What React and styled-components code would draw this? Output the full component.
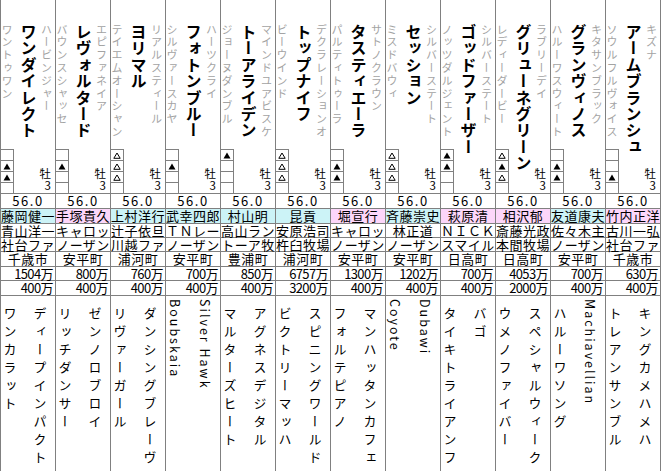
import React from "react";
import styled, { createGlobalStyle } from "styled-components";

const Global = createGlobalStyle`
  html, body { margin: 0; padding: 0; background: #fff; }
  body { font-family: "Noto Sans CJK JP", "Noto Sans", sans-serif; color: #000; }
`;

const LINE = "#808080";

const horses = [
  { dam: "ワントゥワン", name: "ワンダイレクト", sire: "ハービンジャー", marks: ["", "b", "b", ""], trainer: "藤岡健一", east: false, owner: "青山洋一", breeder: "社台ファ", area: "千歳市", p1: "1504万", p2: "400万", gdam: "ワンカラット", bms: "ディープインパクト" },
  { dam: "バウンスシャッセ", name: "レヴォルタード", sire: "エピファネイア", marks: ["", "b", "", ""], trainer: "手塚貴久", east: true, owner: "キャロッ", breeder: "ノーザン", area: "安平町", p1: "800万", p2: "400万", gdam: "リッチダンサー", bms: "ゼンノロブロイ" },
  { dam: "テイエムオーシャン", name: "ヨリマル", sire: "リアルスティール", marks: ["w", "w", "w", ""], trainer: "上村洋行", east: false, owner: "辻子依旦", breeder: "川越ファ", area: "浦河町", p1: "760万", p2: "400万", gdam: "リヴァーガール", bms: "ダンシングブレーヴ" },
  { dam: "シルヴァースカヤ", name: "フォトンブルー", sire: "ハーツクライ", marks: ["", "b", "", ""], trainer: "武幸四郎", east: false, owner: "ＴＮレー", breeder: "ノーザン", area: "安平町", p1: "700万", p2: "400万", gdam: "Boubskaia", bms: "Silver Hawk" },
  { dam: "ジョーヌダンブル", name: "トーアライデン", sire: "マインドユアビスケ", marks: ["b", "", "", ""], trainer: "村山明", east: false, owner: "高山ラン", breeder: "トーア牧", area: "豊浦町", p1: "850万", p2: "400万", gdam: "マルターズヒート", bms: "アグネスデジタル" },
  { dam: "ビーウインド", name: "トップナイフ", sire: "デクラレーションオ", marks: ["w", "w", "w", ""], trainer: "昆貢", east: false, owner: "安原浩司", breeder: "杵臼牧場", area: "浦河町", p1: "6757万", p2: "3200万", gdam: "ビクトリーマッハ", bms: "スピニングワールド" },
  { dam: "パルティトゥーラ", name: "タスティエーラ", sire: "サトノクラウン", marks: ["", "b", "b", ""], trainer: "堀宣行", east: true, owner: "キャロッ", breeder: "ノーザン", area: "安平町", p1: "1300万", p2: "400万", gdam: "フォルテピアノ", bms: "マンハッタンカフェ" },
  { dam: "ミスドバウィ", name: "セッション", sire: "シルバーステート", marks: ["w", "w", "w", ""], trainer: "斉藤崇史", east: false, owner: "林正道", breeder: "ノーザン", area: "安平町", p1: "1202万", p2: "400万", gdam: "Coyote", bms: "Dubawi" },
  { dam: "ノッツダルジェント", name: "ゴッドファーザー", sire: "シルバーステート", marks: ["b", "b", "", ""], trainer: "萩原清", east: true, owner: "ＮＩＣＫ", breeder: "スマイル", area: "日高町", p1: "700万", p2: "400万", gdam: "タイキトライアンフ", bms: "バゴ" },
  { dam: "レディーダービー", name: "グリューネグリーン", sire: "ラブリーデイ", marks: ["w", "b", "w", ""], trainer: "相沢郁", east: true, owner: "斎藤光政", breeder: "本間牧場", area: "日高町", p1: "4053万", p2: "2000万", gdam: "ウメノファイバー", bms: "スペシャルウィーク" },
  { dam: "ハルーワスウィート", name: "グランヴィノス", sire: "キタサンブラック", marks: ["", "b", "b", ""], trainer: "友道康夫", east: false, owner: "佐々木主", breeder: "ノーザン", area: "安平町", p1: "700万", p2: "400万", gdam: "ハルーワソング", bms: "Machiavellian" },
  { dam: "ソウルフルヴォイス", name: "アームブランシュ", sire: "キズナ", marks: ["", "", "b", ""], trainer: "竹内正洋", east: true, owner: "古川一弘", breeder: "社台ファ", area: "千歳市", p1: "630万", p2: "400万", gdam: "トレアンサンブル", bms: "キングカメハメハ" },
];

const Table = styled.div`
  display: flex;
  width: 661px;
  border-left: 1px solid ${LINE};
  box-sizing: border-box;
`;

const Column = styled.div`
  flex: 0 0 55px;
  width: 55px;
  box-sizing: border-box;
  border-right: 1px solid ${LINE};
  display: flex;
  flex-direction: column;
`;

const Top = styled.div`
  height: 194px;
  box-sizing: border-box;
  border-bottom: 1px solid ${LINE};
  display: grid;
  grid-template: 1fr / 1fr;
`;

const Names = styled.div`
  grid-area: 1 / 1;
  align-self: start;
  display: flex;
  padding-top: 24px;
`;

const GrayName = styled.div`
  writing-mode: vertical-rl;
  font-size: 11px;
  line-height: 11px;
  width: 11px;
  letter-spacing: 1.8px;
  color: #a3a3a3;
  white-space: nowrap;
  margin-left: ${(p) => p.$ml || 0}px;
`;

const HorseName = styled.div`
  writing-mode: vertical-rl;
  font-size: 16px;
  line-height: 16px;
  width: 16px;
  font-weight: 700;
  letter-spacing: 0.4px;
  white-space: nowrap;
  margin-left: 8.5px;
`;

const Footer = styled.div`
  grid-area: 1 / 1;
  align-self: end;
  display: flex;
  justify-content: space-between;
  align-items: flex-end;
`;

const Marks = styled.div`
  display: flex;
  flex-direction: column;
  width: 13px;
`;

const MarkBox = styled.div`
  height: 11px;
  width: 13px;
  box-sizing: border-box;
  border-top: 1px solid ${LINE};
  border-right: 1px solid ${LINE};
  display: flex;
  align-items: center;
  justify-content: center;
`;

const SexAge = styled.div`
  display: flex;
  flex-direction: column;
  align-items: flex-end;
  padding: 0 4px 2px 0;
  font-size: 11.5px;
  line-height: 11.5px;
`;

const Row = styled.div`
  height: ${(p) => p.$h}px;
  line-height: ${(p) => p.$h - 1}px;
  box-sizing: border-box;
  border-bottom: 1px solid ${LINE};
  background: ${(p) => p.$bg || "transparent"};
  font-size: 13px;
  text-align: ${(p) => p.$align || "center"};
  padding-right: ${(p) => (p.$align === "right" ? 2 : 0)}px;
  white-space: nowrap;
  letter-spacing: ${(p) => (p.$ls === undefined ? 0.5 : p.$ls)}px;
`;

const Bottom = styled.div`
  height: 176px;
  box-sizing: border-box;
  border-bottom: 1px solid ${LINE};
  display: flex;
  padding-left: 2.5px;
  gap: 17px;
`;

const SubName = styled.div`
  writing-mode: vertical-rl;
  line-height: 13px;
  width: 13px;
  white-space: nowrap;
  padding-top: ${(p) => (p.$latin ? 3 : 11)}px;
  letter-spacing: ${(p) => (p.$latin ? 2 : 5)}px;
  font-size: ${(p) => (p.$latin ? 12.5 : 13)}px;
`;

const Tri = ({ kind }) => (
  <svg width="8" height="7" viewBox="0 0 8 7">
    {kind === "b" ? (
      <polygon points="4,0.5 7.5,6.5 0.5,6.5" fill="#000" />
    ) : (
      <polygon points="4,1 7.2,6.3 0.8,6.3" fill="none" stroke="#000" strokeWidth="1" />
    )}
  </svg>
);

const isLatin = (s) => /^[A-Za-z ]+$/.test(s);

function Horse({ h }) {
  return (
    <Column>
      <Top>
        <Names>
          <GrayName>{h.dam}</GrayName>
          <HorseName>{h.name}</HorseName>
          <GrayName $ml={4}>{h.sire}</GrayName>
        </Names>
        <Footer>
          <Marks>
            {h.marks.map((m, i) => (
              <MarkBox key={i}>{m && <Tri kind={m} />}</MarkBox>
            ))}
          </Marks>
          <SexAge>
            <span>牡</span>
            <span>3</span>
          </SexAge>
        </Footer>
      </Top>
      <Row $h={15} $ls={1.5}>56.0</Row>
      <Row $h={15} $bg={h.east ? "#fcd6fa" : "#ccf3f7"}>{h.trainer}</Row>
      <Row $h={14}>{h.owner}</Row>
      <Row $h={14}>{h.breeder}</Row>
      <Row $h={15}>{h.area}</Row>
      <Row $h={14} $align="right" $ls={-0.6}>{h.p1}</Row>
      <Row $h={15} $align="right" $ls={-0.6}>{h.p2}</Row>
      <Bottom>
        <SubName $latin={isLatin(h.gdam)}>{h.gdam}</SubName>
        <SubName $latin={isLatin(h.bms)}>{h.bms}</SubName>
      </Bottom>
    </Column>
  );
}

export default function App() {
  return (
    <>
      <Global />
      <Table>
        {horses.map((h, i) => (
          <Horse key={i} h={h} />
        ))}
      </Table>
    </>
  );
}
